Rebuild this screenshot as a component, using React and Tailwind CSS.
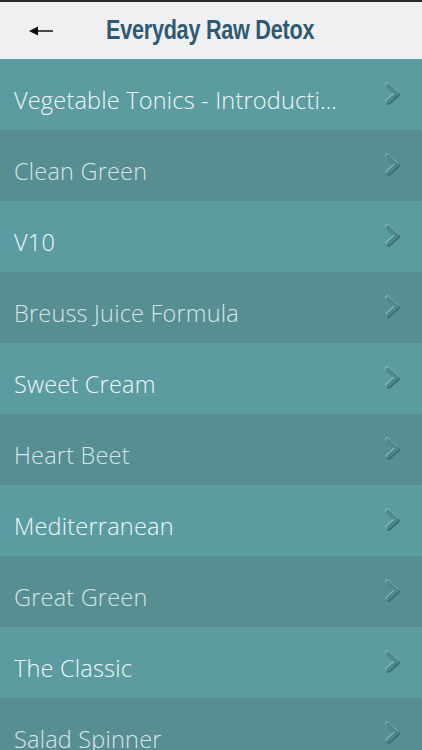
const ITEMS = [
  'Vegetable Tonics - Introduction',
  'Clean Green',
  'V10',
  'Breuss Juice Formula',
  'Sweet Cream',
  'Heart Beet',
  'Mediterranean',
  'Great Green',
  'The Classic',
  'Salad Spinner',
]

function Chevron() {
  const pts = '4.5,4 14,12.5 5,20.5'
  return (
    <svg width="18" height="25" viewBox="0 0 18 25" className="shrink-0">
      <polyline points={pts} fill="none" stroke="#3a6d71" strokeWidth="4.4" strokeLinecap="round" strokeLinejoin="round" transform="translate(0.7,1)" />
      <polyline points={pts} fill="none" stroke="#92c4c7" strokeWidth="4" strokeLinecap="round" strokeLinejoin="round" transform="translate(-0.4,-0.6)" />
      <polyline points={pts} fill="none" stroke="#4c878b" strokeWidth="3.4" strokeLinecap="round" strokeLinejoin="round" />
    </svg>
  )
}

export default function App() {
  return (
    <div className="w-[422px] h-[750px] overflow-hidden bg-[#5b9ca1]" style={{ fontFamily: '"Open Sans", Lato, sans-serif' }}>
      {/* header */}
      <div className="h-[59px] bg-[#eef0f1] border-t-2 border-[#2a2a2a] flex items-center">
        <svg width="26" height="12" viewBox="0 0 26 12" className="ml-[29px]">
          <path d="M0 6 L9 1.5 L9 10.5 Z" fill="#111" />
          <line x1="7" y1="6" x2="24" y2="6" stroke="#111" strokeWidth="1.5" />
        </svg>
        <div
          className="ml-[51px] text-[27px] font-bold text-[#2e5a74] tracking-[-0.3px] leading-none scale-x-[0.8] origin-left whitespace-nowrap"
          style={{ fontFamily: '"Liberation Sans", Arial, sans-serif' }}
        >
          Everyday Raw Detox
        </div>
      </div>

      {ITEMS.map((t, i) => (
        <div
          key={t}
          className={
            'h-[71px] flex items-center pl-[14px] pr-[21px] ' +
            (i % 2 === 0 ? 'bg-[#5b9ca1] text-[#f2f7f7]' : 'bg-[#578e92] text-[#d6e6e7]')
          }
        >
          <div className="flex-1 min-w-0 pr-[42px] pt-[12px] text-[23.5px] tracking-[0.2px] font-light truncate">{t}</div>
          <div className="-mt-[2px]">
            <Chevron />
          </div>
        </div>
      ))}
    </div>
  )
}
